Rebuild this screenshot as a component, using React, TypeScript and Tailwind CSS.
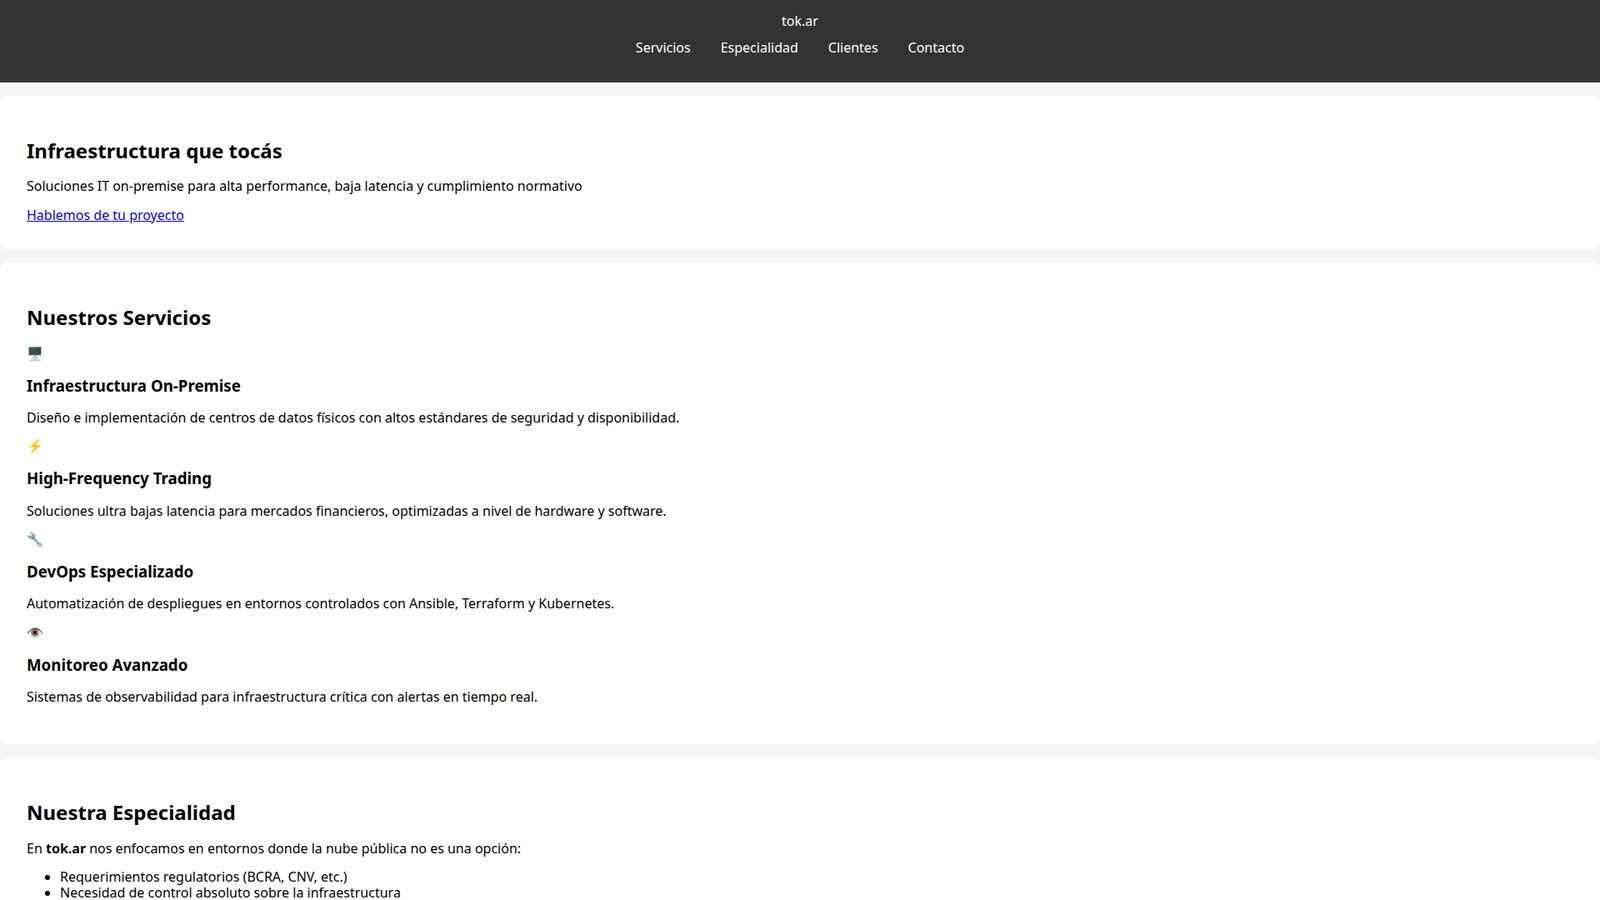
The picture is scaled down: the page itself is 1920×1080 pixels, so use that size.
const services = [
  {
    icon: "🖥️",
    title: "Infraestructura On-Premise",
    text: "Diseño e implementación de centros de datos físicos con altos estándares de seguridad y disponibilidad.",
  },
  {
    icon: "⚡",
    title: "High-Frequency Trading",
    text: "Soluciones ultra bajas latencia para mercados financieros, optimizadas a nivel de hardware y software.",
  },
  {
    icon: "🔧",
    title: "DevOps Especializado",
    text: "Automatización de despliegues en entornos controlados con Ansible, Terraform y Kubernetes.",
  },
  {
    icon: "👁️",
    title: "Monitoreo Avanzado",
    text: "Sistemas de observabilidad para infraestructura crítica con alertas en tiempo real.",
  },
];

function Section({ children }: { children: React.ReactNode }) {
  return <section className="mt-4 rounded-lg bg-white px-8 py-8">{children}</section>;
}

function H2({ children }: { children: React.ReactNode }) {
  return <h2 className="my-[19.9px] text-[24px] font-bold leading-[27.6px]">{children}</h2>;
}

export default function App() {
  return (
    <div className="h-screen overflow-y-scroll bg-[#f4f4f4] font-['Liberation_Sans',Arial,sans-serif] text-[16px] leading-[18.4px] text-black">
      <header className="h-[99px] bg-[#333] pt-4 text-center text-white">
        <div>tok.ar</div>
        <nav className="mt-[14px] flex justify-center gap-9">
          <a href="#servicios">Servicios</a>
          <a href="#especialidad">Especialidad</a>
          <a href="#clientes">Clientes</a>
          <a href="#contacto">Contacto</a>
        </nav>
      </header>

      <Section>
        <H2>Infraestructura que tocás</H2>
        <p className="mb-4">Soluciones IT on-premise para alta performance, baja latencia y cumplimiento normativo</p>
        <a href="#contacto" className="text-[#0000ee] underline">
          Hablemos de tu proyecto
        </a>
      </Section>

      <Section>
        <H2>Nuestros Servicios</H2>
        {services.map((s) => (
          <div key={s.title}>
            <div>{s.icon}</div>
            <h3 className="my-[18.7px] text-[18.7px] font-bold leading-[21.5px]">{s.title}</h3>
            <p className="mb-4">{s.text}</p>
          </div>
        ))}
      </Section>

      <Section>
        <H2>Nuestra Especialidad</H2>
        <p className="mb-4">
          En <strong>tok.ar</strong> nos enfocamos en entornos donde la nube pública no es una opción:
        </p>
        <ul className="mb-4 list-disc pl-10">
          <li>Requerimientos regulatorios (BCRA, CNV, etc.)</li>
          <li>Necesidad de control absoluto sobre la infraestructura</li>
        </ul>
      </Section>
    </div>
  );
}
